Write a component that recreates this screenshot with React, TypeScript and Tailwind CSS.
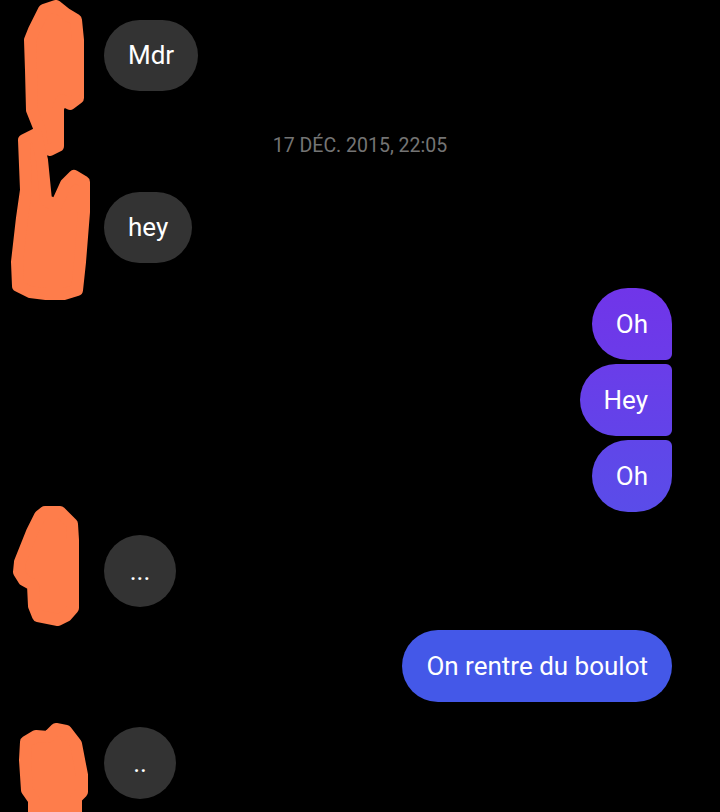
const font = { fontFamily: 'Roboto, "Noto Sans", sans-serif' };

const Incoming = ({ text, round }: { text: string; round?: boolean }) => (
    <div className="flex pl-[104px]">
        <div
            className={
                round
                    ? 'flex h-[72px] w-[72px] items-center justify-center rounded-full bg-[#333333] text-[26px] text-white'
                    : 'flex h-[71px] items-center rounded-full bg-[#333333] px-6 text-[26px] text-white'
            }
        >
            {text}
        </div>
    </div>
);

const Outgoing = ({ text, shape }: { text: string; shape: string }) => (
    <div className="flex justify-end pr-[48px]">
        <div className={`flex h-[72px] items-center px-6 text-[26px] text-white ${shape}`}>{text}</div>
    </div>
);

// redacted avatars, hand-drawn
const Scribbles = () => (
    <svg className="pointer-events-none absolute left-0 top-0" width="120" height="812" viewBox="0 0 120 812">
        <g fill="#fe7d4b" stroke="#fe7d4b" strokeWidth="12" strokeLinejoin="round">
            <path d="M34 30 L44 10 L56 6 L66 14 L76 20 L78 40 L78 98 L70 104 L62 100 L58 108 L58 146 L50 150 L42 148 L40 130 L32 110 L31 70 L30 40 Z" />
            <path d="M24 140 L36 134 L42 160 L46 200 L56 206 L66 184 L74 176 L84 182 L84 212 L80 262 L77 290 L64 294 L46 294 L30 292 L18 286 L17 262 L22 218 L26 190 Z" />
            <path d="M45 512 L60 512 L72 524 L73 540 L73 608 L66 616 L58 620 L48 618 L38 616 L34 606 L33 585 L24 580 L19 572 L20 562 L32 532 L40 516 Z" />
            <path d="M26 742 L36 736 L48 737 L56 729 L66 731 L76 744 L82 775 L82 792 L76 798 L76 812 L34 812 L34 800 L27 790 L25 760 Z" />
        </g>
    </svg>
);

export default function App() {
    return (
        <div className="relative h-[812px] w-[720px] overflow-hidden bg-black" style={font}>
            <div className="flex flex-col pt-[20px]">
                <Incoming text="Mdr" />
                <div className="flex h-[101px] items-center justify-center pt-[8px] text-[19.5px] text-[#747474]">
                    17 DÉC. 2015, 22:05
                </div>
                <Incoming text="hey" />
                <div className="mt-[25px] flex flex-col gap-[4px]">
                    <Outgoing
                        text="Oh"
                        shape="rounded-[36px] rounded-br-[6px] bg-gradient-to-b from-[#7035e9] to-[#6b3be9]"
                    />
                    <Outgoing
                        text="Hey"
                        shape="rounded-[36px] rounded-r-[6px] bg-gradient-to-b from-[#6a3de9] to-[#6243e9]"
                    />
                    <Outgoing
                        text="Oh"
                        shape="rounded-[36px] rounded-tr-[6px] bg-gradient-to-b from-[#6046e9] to-[#5a4ce9]"
                    />
                </div>
                <div className="mt-[23px]">
                    <Incoming text="..." round />
                </div>
                <div className="mt-[23px]">
                    <Outgoing text="On rentre du boulot" shape="rounded-full bg-[#4458e8]" />
                </div>
                <div className="mt-[25px]">
                    <Incoming text=".." round />
                </div>
            </div>
            <Scribbles />
        </div>
    );
}
